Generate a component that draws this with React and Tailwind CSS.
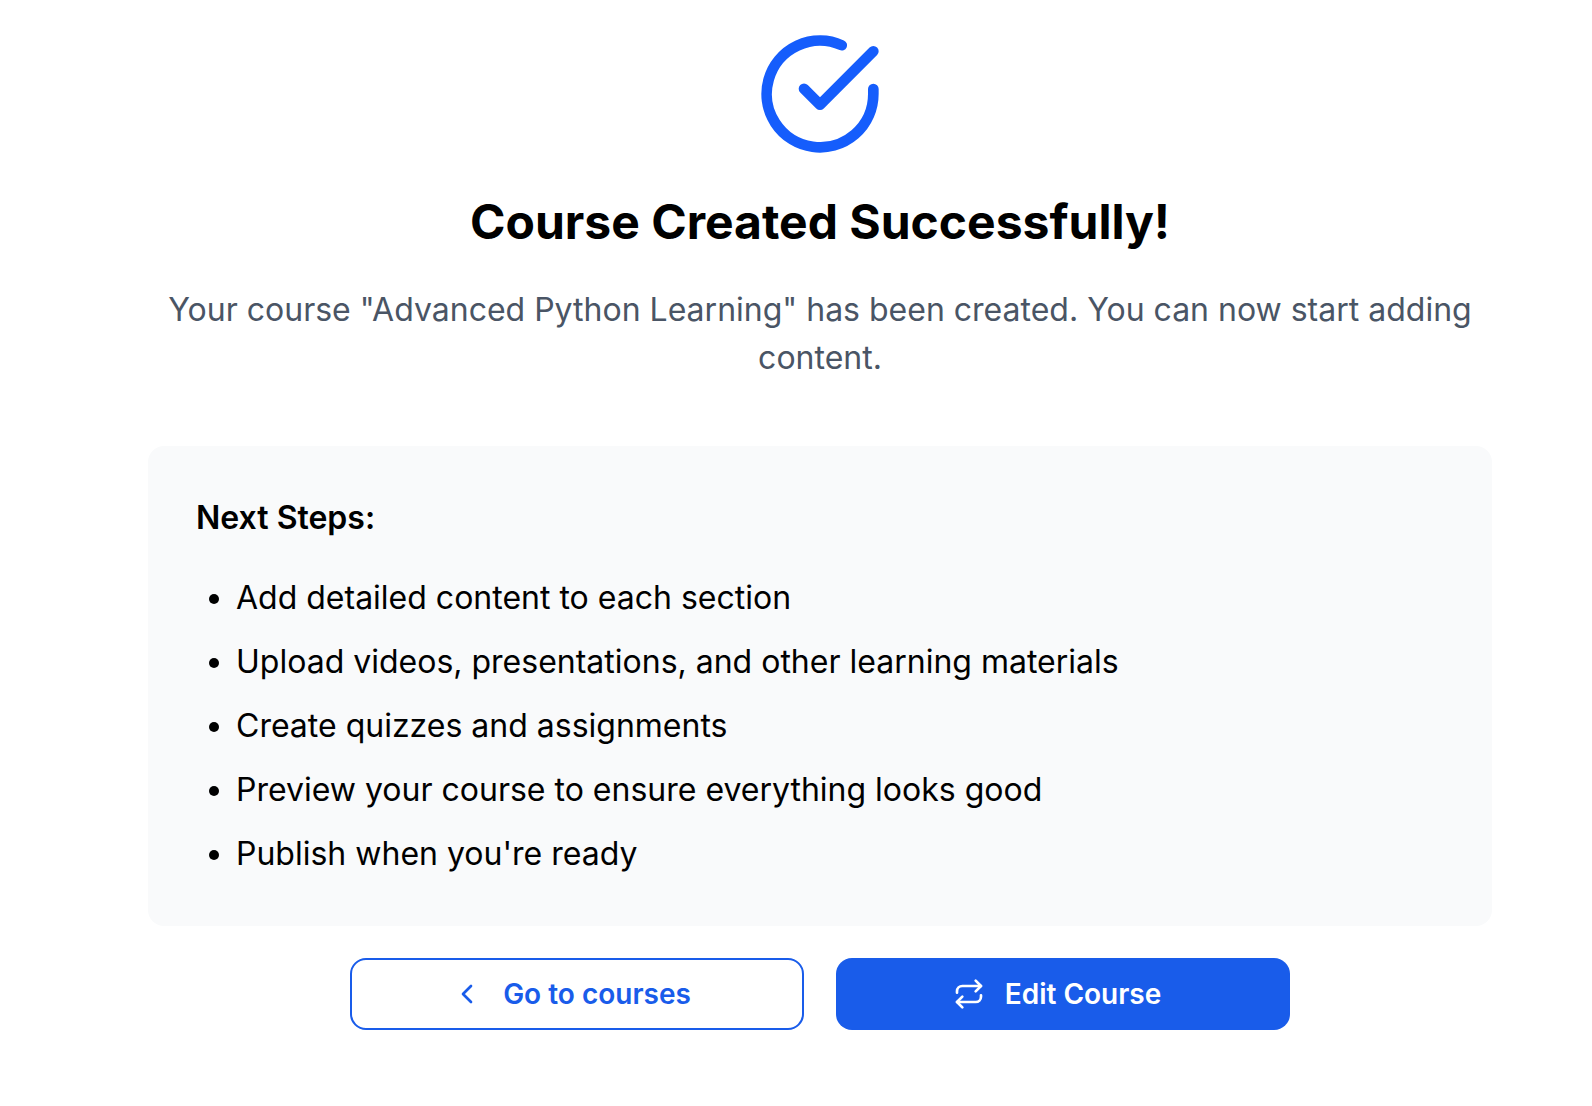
import { ChevronLeft, Repeat } from "lucide-react";

const steps = [
  "Add detailed content to each section",
  "Upload videos, presentations, and other learning materials",
  "Create quizzes and assignments",
  "Preview your course to ensure everything looks good",
  "Publish when you're ready",
];

function CheckCircle({ className }) {
  return (
    <svg
      viewBox="0 0 24 24"
      fill="none"
      stroke="currentColor"
      strokeWidth="2"
      strokeLinecap="round"
      strokeLinejoin="round"
      className={className}
      aria-hidden="true"
    >
      <path d="M22 11.08V12a10 10 0 1 1-5.93-9.14" />
      <path d="M22 4 12 14.01l-3-3" />
    </svg>
  );
}

export default function App() {
  return (
    <main className="min-h-screen bg-white pt-[30px] pr-[100px] pb-16 pl-[148px] font-[Inter,sans-serif] text-black">
      <div className="flex flex-col items-center text-center">
        <CheckCircle className="size-32 text-[#155dfc]" />
        <h1 className="mt-8 text-[48px] leading-16 font-bold">Course Created Successfully!</h1>
        <p className="mt-8 text-[32px] leading-12 text-[#4a5565]">
          Your course "Advanced Python Learning" has been created. You can now start adding content.
        </p>
      </div>
      <section className="mt-16 rounded-2xl bg-[#f9fafb] p-12">
        <h2 className="text-[32px] leading-12 font-semibold">Next Steps:</h2>
        <ul className="mt-8 list-disc space-y-4 pl-10 text-[32px] leading-12">
          {steps.map((s) => (
            <li key={s}>{s}</li>
          ))}
        </ul>
      </section>
      <div className="mt-8 flex justify-center gap-8 text-[28px] leading-10 font-semibold">
        <button type="button" className="flex h-[72px] w-[454px] items-center justify-center gap-5 rounded-2xl border-2 border-[#195cea] pr-3 text-[#195cea]">
          <ChevronLeft className="size-8" aria-hidden="true" />
          Go to courses
        </button>
        <button type="button" className="flex h-[72px] w-[454px] items-center justify-center gap-5 rounded-2xl bg-[#195cea] pr-3 text-white">
          <Repeat className="size-8" aria-hidden="true" />
          Edit Course
        </button>
      </div>
    </main>
  );
}
